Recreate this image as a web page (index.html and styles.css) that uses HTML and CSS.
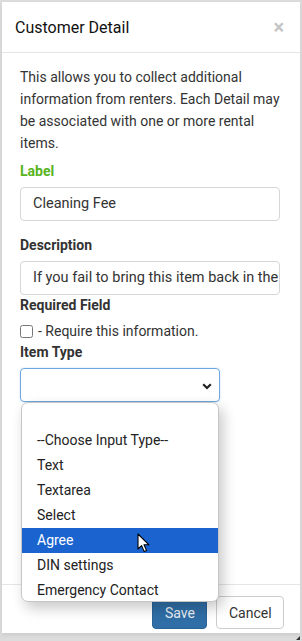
FILE: index.html
```html
<!DOCTYPE html>
<html lang="en">
<head>
  <meta charset="UTF-8" />
  <meta name="viewport" content="width=device-width, initial-scale=1.0"/>
  <title>Customer Detail</title>
  <link rel="stylesheet" href="styles.css">
</head>
<body>

<div class="modal">
  <div class="modal-header">
    <h4 class="modal-title">Customer Detail</h4>
    <span class="close">&times;</span>
  </div>

  <div class="modal-body">
    <p class="intro">This allows you to collect additional information from renters. Each Detail may be associated with one or more rental items.</p>

    <div class="form-group first">
      <label class="label-green">Label</label>
      <div class="input">Cleaning Fee</div>
    </div>

    <div class="form-group">
      <label>Description</label>
      <div class="input">If you fail to bring this item back in the</div>
    </div>

    <label>Required Field</label>
    <div class="check-row">
      <input type="checkbox" />
      <span>- Require this information.</span>
    </div>

    <label class="item-type">Item Type</label>
    <div class="select-wrap">
      <div class="select">
        <svg class="chevron" width="10" height="7" viewBox="0 0 10 7">
          <path d="M1.2 1.2 L5 5 L8.8 1.2" fill="none" stroke="#222" stroke-width="2.2" />
        </svg>
      </div>

      <div class="dropdown">
        <div class="option"></div>
        <div class="option">--Choose Input Type--</div>
        <div class="option">Text</div>
        <div class="option">Textarea</div>
        <div class="option">Select</div>
        <div class="option active">Agree</div>
        <div class="option">DIN settings</div>
        <div class="option">Emergency Contact</div>
        <svg class="cursor" width="14" height="20" viewBox="0 0 14 20">
          <path d="M1 1 L1 16 L4.6 12.6 L7.2 18.6 L9.6 17.6 L7 11.8 L12 11.8 Z" fill="#fff" stroke="#000" stroke-width="1.1" stroke-linejoin="round" />
        </svg>
      </div>
    </div>
  </div>

  <div class="modal-footer">
    <button class="btn btn-primary">Save</button>
    <button class="btn btn-default">Cancel</button>
  </div>
</div>

<div class="grip"></div>

</body>
</html>
```

FILE: styles.css
```css
* {
  box-sizing: border-box;
}

html, body {
  height: 641px;
}

body {
  margin: 0;
  padding: 2px 2px 0 2px;
  background: #dcdcdc;
  font-family: Roboto, "Liberation Sans", Arial, sans-serif;
  color: #333;
  font-size: 14px;
  overflow: hidden;
  position: relative;
}

.modal {
  height: 631px;
  background: #fff;
  display: flex;
  flex-direction: column;
  box-shadow: 0 2px 4px rgba(0,0,0,0.08);
}

.modal-header {
  height: 51px;
  border-bottom: 1px solid #e5e5e5;
  display: flex;
  align-items: center;
  justify-content: space-between;
  padding: 0 16px 0 13px;
}

.modal-title {
  margin: 0;
  font-size: 16px;
  font-weight: 400;
  color: #111;
  padding-top: 1px;
}

.close {
  font-size: 20px;
  font-weight: bold;
  color: #c4c4c4;
  line-height: 1;
}

.modal-body {
  padding: 0 20px 0 18px;
}

.intro {
  margin: 13px 0 0;
  line-height: 22px;
  font-size: 14px;
}

label {
  display: block;
  font-weight: bold;
  line-height: 20px;
  color: #333;
}

.label-green {
  color: #57b41c;
}

.form-group {
  margin-top: 14px;
}

.form-group.first {
  margin-top: 7px;
}

.form-group label {
  margin-bottom: 6px;
}

.input {
  height: 34px;
  border: 1px solid #d6d6d6;
  border-radius: 4px;
  padding: 0 12px;
  line-height: 32px;
  white-space: nowrap;
  overflow: hidden;
  color: #333;
  font-size: 14.5px;
}

.check-row {
  margin-top: 6px;
  display: flex;
  align-items: center;
  gap: 5px;
  line-height: 20px;
}

.check-row input {
  margin: 0;
  width: 13px;
  height: 13px;
}

.item-type {
  margin-top: 1px;
}

.select-wrap {
  position: relative;
  width: 200px;
  margin-top: 6px;
}

.select {
  height: 34px;
  border: 1px solid #6ea6e0;
  border-radius: 4px;
  box-shadow: 0 0 2px rgba(102,175,233,0.4);
  position: relative;
}

.chevron {
  position: absolute;
  right: 7px;
  top: 14px;
}

.dropdown {
  position: absolute;
  left: 1px;
  top: 34px;
  width: 198px;
  height: 200px;
  background: #fff;
  border: 1px solid #c6c6c6;
  border-radius: 7px;
  box-shadow: 4px 6px 14px rgba(0,0,0,0.22);
  overflow: hidden;
  z-index: 10;
}

.option {
  height: 25px;
  line-height: 25px;
  padding-left: 15px;
  color: #222;
  font-size: 14px;
}

.option.active {
  background: #1b64d0;
  color: #fff;
}

.cursor {
  position: absolute;
  left: 115px;
  top: 130px;
}

.modal-footer {
  margin-top: auto;
  border-top: 1px solid #e5e5e5;
  padding: 11px 16px 4px;
  display: flex;
  justify-content: flex-end;
  gap: 9px;
}

.btn {
  height: 33px;
  border-radius: 4px;
  font-family: Roboto, "Liberation Sans", Arial, sans-serif;
  font-size: 14px;
  padding: 0 12px;
}

.btn-primary {
  width: 55px;
  background: #2f6ea6;
  border: 1px solid #2a6396;
  color: #e8eff6;
}

.btn-default {
  width: 68px;
  background: #fff;
  border: 1px solid #ccc;
  color: #333;
}

.grip {
  position: absolute;
  right: 2px;
  bottom: 1px;
  width: 0;
  height: 0;
  border-left: 4px solid transparent;
  border-bottom: 4px solid #333;
}
```
